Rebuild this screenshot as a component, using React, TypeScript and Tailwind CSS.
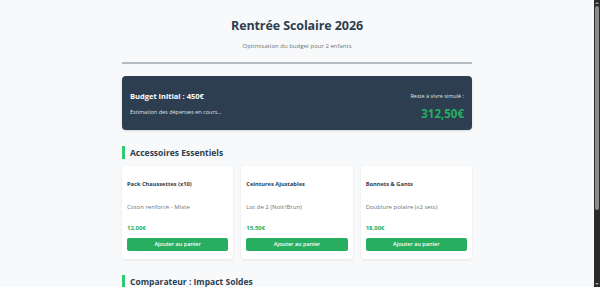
import React from "react";

const items = [
  { name: "Pack Chaussettes (x10)", desc: "Coton renforcé - Mixte", price: "12,00€" },
  { name: "Ceintures Ajustables", desc: "Lot de 2 (Noir/Brun)", price: "15,50€" },
  { name: "Bonnets & Gants", desc: "Doublure polaire (x2 sets)", price: "18,00€" },
];

export default function App() {
  return (
    <div
      className="flex h-screen overflow-hidden bg-[#f8f9fa] text-[#2c3e50]"
      style={{ fontFamily: '"Open Sans", "Noto Sans", sans-serif' }}
    >
      <div className="flex-1 overflow-hidden">
        <div className="mx-auto w-[350px] pt-[17px] pb-[30px]">
          <header className="text-center">
            <h1 className="text-[12.5px] leading-[17px] font-bold tracking-[-0.1px] text-[#2c3e50]">Rentrée Scolaire 2026</h1>
            <p className="mt-[8px] text-[6px] leading-[9px] text-[#6c757d]">Optimisation du budget pour 2 enfants</p>
          </header>
          <div className="mt-[11px] h-[2px] bg-[#b4bac2]" />

          <div className="mt-[12px] h-[54px] rounded-[4px] bg-[#2c3e50] px-[8px] pt-[15px] flex justify-between shadow-sm">
            <div>
              <div className="text-[7.5px] leading-[10px] font-bold text-white">Budget Initial : 450€</div>
              <div className="mt-[7px] text-[5.5px] leading-[8px] text-[#dfe4ea]">Estimation des dépenses en cours...</div>
            </div>
            <div className="text-right">
              <div className="mt-[1px] text-[5.5px] leading-[8px] text-[#dfe4ea]">Reste à vivre simulé :</div>
              <div className="mt-[6px] text-[11.5px] leading-[15px] font-bold text-[#27ae60]">312,50€</div>
            </div>
          </div>

          <h2 className="mt-[16px] border-l-[3px] border-[#2ecc71] pl-[5px] text-[8.5px] leading-[13px] font-bold text-[#2c3e50]">
            Accessoires Essentiels
          </h2>

          <div className="mt-[7px] grid grid-cols-3 gap-[8px]">
            {items.map((it) => (
              <div key={it.name} className="h-[93px] rounded-[4px] bg-white px-[5px] pt-[14px] shadow-[0_1px_3px_rgba(0,0,0,0.08)]">
                <div className="text-[5.7px] leading-[9px] font-bold text-[#2c3e50]">{it.name}</div>
                <div className="mt-[14px] text-[6px] leading-[9px] text-[#6c757d]">{it.desc}</div>
                <div className="mt-[12px] text-[6px] leading-[9px] font-bold text-[#27ae60]">{it.price}</div>
                <button className="mt-[5px] block h-[13px] w-full rounded-[2px] bg-[#27ae60] text-[5.5px] leading-[13px] font-semibold text-white">
                  Ajouter au panier
                </button>
              </div>
            ))}
          </div>

          <h2 className="mt-[16px] border-l-[3px] border-[#2ecc71] pl-[5px] text-[8.5px] leading-[13px] font-bold text-[#2c3e50]">
            Comparateur : Impact Soldes
          </h2>

          <div className="mt-[7px] rounded-[4px] bg-white p-[8px] shadow-[0_1px_3px_rgba(0,0,0,0.08)] text-[6px] text-[#2c3e50]">
            <div className="flex justify-between border-b border-[#e5e7eb] pb-[4px] font-bold">
              <span>Article</span><span>Prix normal</span><span>Prix soldé</span>
            </div>
            <div className="flex justify-between py-[4px]">
              <span>Cartable</span><span>45,00€</span><span className="text-[#27ae60] font-bold">31,50€</span>
            </div>
          </div>
        </div>
      </div>

      <div className="flex w-[6px] flex-col bg-[#2b2b2b]">
        <div className="flex h-[6px] items-center justify-center">
          <div className="h-0 w-0 border-x-[2px] border-b-[2px] border-x-transparent border-b-[#a0a0a0]" />
        </div>
        <div className="mx-[1px] h-[204px] rounded-[2px] bg-[#8c8c8c]" />
        <div className="flex-1" />
        <div className="flex h-[6px] items-center justify-center">
          <div className="h-0 w-0 border-x-[2px] border-t-[2px] border-x-transparent border-t-[#a0a0a0]" />
        </div>
      </div>
    </div>
  );
}
